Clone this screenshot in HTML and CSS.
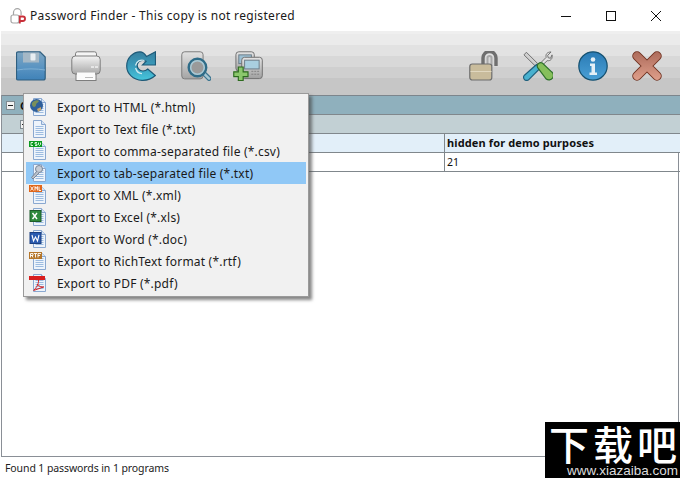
FILE: index.html
```html
<!DOCTYPE html>
<html lang="en">
<head>
<meta charset="utf-8">
<title>Password Finder</title>
<link rel="stylesheet" href="styles.css">
</head>
<body>
<svg class="defs" width="0" height="0">
  <symbol id="doc" viewBox="0 0 20 20">
    <path d="M4.500 1.500h8l4 4v13h-12z" fill="#eef4fb" stroke="#8aa8d0"/>
    <path d="M12.500 1.500v4h4" fill="#d6e4f5" stroke="#8aa8d0"/>
    <path d="M6.500 7.500h8M6.500 9.500h8M6.500 11.500h8M6.500 13.500h8M6.500 15.500h8" stroke="#9dbce0"/>
  </symbol>
</svg>
<div class="app">
  <header class="titlebar">
    <svg class="app-icon" viewBox="0 0 18 18" width="18" height="18">
      <path d="M4.500 8V5.500a3.800 3.800 0 0 1 7.600 0V8" fill="none" stroke="#a5a5a5" stroke-width="1.200"/>
      <rect x="2" y="8" width="8" height="8" rx="2" fill="none" stroke="#a5a5a5" stroke-width="1.200"/>
      <path d="M10.800 16.500V9.500h3a2.100 2.100 0 0 1 0 4.500h-3" fill="none" stroke="#c8303a" stroke-width="1.800"/>
    </svg>
    <span class="title">Password Finder - This copy is not registered</span>
    <div class="win-controls">
      <svg width="12" height="12" viewBox="0 0 12 12"><path d="M1 6.500h10" stroke="#111" fill="none"/></svg>
      <svg width="12" height="12" viewBox="0 0 12 12"><rect x="1.500" y="1.500" width="9" height="9" stroke="#111" fill="none"/></svg>
      <svg width="12" height="12" viewBox="0 0 12 12"><path d="M1 1l10 10M11 1L1 11" stroke="#111" fill="none"/></svg>
    </div>
  </header>

  <main class="panel">
    <nav class="toolbar">
      <div class="tools">
        <svg class="tool" viewBox="0 0 30 30"><defs><linearGradient id="sv" x1="0" y1="0" x2="0" y2="1"><stop offset="0" stop-color="#7fa6c2"/><stop offset=".55" stop-color="#5a94c2"/><stop offset="1" stop-color="#3f82b8"/></linearGradient></defs>
          <path d="M2 .8h22l5.200 5.200v21a2 2 0 0 1-2 2H2a1.500 1.500 0 0 1-1.500-1.500V2.300A1.500 1.500 0 0 1 2 .8z" fill="url(#sv)" stroke="#2f5f80" stroke-width="1.200"/>
          <rect x="7" y="1.500" width="16" height="10" fill="#a5b8c6"/><rect x="14.500" y="2.500" width="5" height="7" rx="1" fill="#e8eef2"/>
          <path d="M1 19c8-1.500 20-1.500 28 0" stroke="#7fb0d4" fill="none"/>
        </svg>
        <svg class="tool" viewBox="0 0 30 30"><defs><linearGradient id="pr" x1="0" y1="0" x2="0" y2="1"><stop offset="0" stop-color="#f4f4f4"/><stop offset="1" stop-color="#a9a9a9"/></linearGradient></defs>
          <rect x="4.500" y=".8" width="21" height="8" rx="2" fill="#f5f5f5" stroke="#7d7d7d"/>
          <rect x="5" y="20" width="20" height="9.500" fill="#fff" stroke="#7d7d7d"/>
          <rect x=".8" y="5" width="28.400" height="18" rx="3.500" fill="url(#pr)" stroke="#7d7d7d"/>
          <rect x="20" y="15" width="3" height="2" fill="#e6e6e6"/><rect x="24" y="15" width="3" height="2" fill="#e6e6e6"/>
          <path d="M6 21.500h18v7H6z" fill="#fbfbfb"/><path d="M14 26.500h8" stroke="#bbb"/>
        </svg>
        <svg class="tool" viewBox="0 0 30 30"><defs><linearGradient id="rf" x1="0" y1="0" x2="0" y2="1"><stop offset="0" stop-color="#38809f"/><stop offset=".5" stop-color="#3a9cbc"/><stop offset="1" stop-color="#46c6dc"/></linearGradient></defs>
          <path d="M20.500 5.500 29.500.8V14H16.500l3.500-3.700c-3.500-2-7.500-.6-8.500 2.400-1.200 3.800 2 7.300 5.500 7.300 2 0 3.500-.8 4.800-2l7.500 6.500C25.500 28 21 29.500 16 29.300 7 29 .7 22.500.7 15 .7 7 7 .9 14 .8c2.500 0 4.800 2 6.500 4.700z" fill="url(#rf)" stroke="#1e5a78" stroke-width="1.200"/>
          <path d="M9.500 14.500c.8-4 5-6.500 9-5M9.600 17c.8 3 3 5.400 6.400 5.600" fill="none" stroke="#cfe9ef" stroke-width="1.300"/>
        </svg>
        <svg class="tool" viewBox="0 0 31 31"><defs><linearGradient id="pv" x1="0" y1="0" x2="0" y2="1"><stop offset="0" stop-color="#e2e2e2"/><stop offset="1" stop-color="#a4a4a4"/></linearGradient></defs>
          <rect x=".8" y=".8" width="22" height="28" rx="3" fill="url(#pv)" stroke="#7a7a7a"/>
          <path d="M22 21.500l7 7" stroke="#3d7590" stroke-width="5" stroke-linecap="round"/><path d="M22 21.500l7 7" stroke="#a7c7d3" stroke-width="2.500" stroke-linecap="round"/>
          <circle cx="17" cy="17" r="9" fill="#9a9a9a" stroke="#2f6c88" stroke-width="2.600"/><circle cx="17" cy="17" r="7" fill="none" stroke="#a7c9d6" stroke-width="1.600"/>
        </svg>
        <svg class="tool add" viewBox="0 0 31 31"><defs><linearGradient id="ad" x1="0" y1="0" x2="0" y2="1"><stop offset="0" stop-color="#e4e4e4"/><stop offset="1" stop-color="#a0a0a0"/></linearGradient></defs>
          <rect x="3" y=".8" width="19" height="20" rx="3" fill="url(#ad)" stroke="#707070"/><rect x="6" y="4" width="13" height="9" fill="#9cc0d4" stroke="#6c7c88"/>
          <rect x="9" y="6.500" width="21.300" height="22" rx="3" fill="url(#ad)" stroke="#707070"/><rect x="12" y="9.500" width="15" height="9" fill="#a9cfe0" stroke="#6c7c88"/>
          <path d="M19 21h8M19 24h8" stroke="#808080" stroke-dasharray="2 1"/>
          <path d="M5.500 16.500h5v5h5v5h-5v4h-5v-4H.8v-5h4.700z" fill="#8bc76c" stroke="#2d6b1f" stroke-width="1.200"/>
        </svg>
      </div>
      <div class="tools tools-right">
        <svg class="tool" viewBox="0 0 30 30">
          <path d="M14 15V7a6.500 6.500 0 0 1 13 0v8" fill="none" stroke="#6f6f6f" stroke-width="3.400"/>
          <path d="M18.500 16V7a2 2 0 0 1 4 0v8" fill="none" stroke="#a8a8a8" stroke-width="2"/>
          <rect x=".8" y="13" width="22" height="16" rx="2.500" fill="#c9bc9c" stroke="#6d6d6d" stroke-width="1.200"/>
          <path d="M1.500 20.500h21" stroke="#e1d8c0"/>
        </svg>
        <svg class="tool tool-wide" viewBox="0 0 31 30">
          <path d="M1 3.500 3.500.8l13 13-2.500 2.500z" fill="#d0d0d0" stroke="#6e6e6e"/>
          <path d="M13 17 24 6c-1-3 1-5.500 5-5.500L25.500 4l.5 2.500 2.500.5L30 3.500c.8 4-1.500 6.500-5 6L14 20z" fill="#e2e2e2" stroke="#6e6e6e"/>
          <path d="M14 13.500 1.500 24.500a3 3 0 0 0 4.500 4.500l11-11z" fill="#49b1cf" stroke="#1f5f7c" stroke-width="1.200"/>
          <path d="M15 16.500a3.600 3.600 0 0 1 5-4.500l9.500 9a4 4 0 0 1-5.500 7.500z" fill="#86bf5b" stroke="#2c6f2a" stroke-width="1.200"/>
        </svg>
        <svg class="tool" viewBox="0 0 30 30"><defs><linearGradient id="inf" x1="0" y1="0" x2="0" y2="1"><stop offset="0" stop-color="#2a7ab4"/><stop offset="1" stop-color="#4aa0d6"/></linearGradient></defs>
          <circle cx="15" cy="15" r="14.200" fill="url(#inf)" stroke="#15506f" stroke-width="1.200"/>
          <circle cx="15" cy="8.500" r="2.300" fill="#e4eff6"/><path d="M12 12.500h5v9h2v2.500h-7.500v-2.500h2v-6.500h-1.500z" fill="#e4eff6"/>
        </svg>
        <svg class="tool" viewBox="0 0 30 30"><defs><linearGradient id="xx" gradientUnits="userSpaceOnUse" x1="0" y1="0" x2="0" y2="30"><stop offset="0" stop-color="#ac6a5a"/><stop offset="1" stop-color="#e0a08c"/></linearGradient></defs>
          <path d="M5 5l20 20M25 5L5 25" stroke="#6f2f1e" stroke-width="9.500" stroke-linecap="round" fill="none"/>
          <path d="M5 5l20 20M25 5L5 25" stroke="url(#xx)" stroke-width="7.500" stroke-linecap="round" fill="none"/>
        </svg>
      </div>
    </nav>

    <div class="tree">
      <div class="row row-group">
        <span class="expander"></span>
        <span class="group-name">C</span>
      </div>
      <div class="row row-sub">
        <span class="expander expander-sub"></span>
      </div>
      <div class="row row-head">
        <div class="cell cell-main"></div>
        <div class="cell cell-value">hidden for demo purposes</div>
      </div>
      <div class="row row-data">
        <div class="cell cell-main"></div>
        <div class="cell cell-value cell-plain">21</div>
      </div>
    </div>
  </main>

  <footer class="status">Found 1 passwords in 1 programs</footer>

  <ul class="menu">
    <li class="item"><svg class="mi" viewBox="0 0 20 20"><use href="#doc"/><circle cx="7.500" cy="8.500" r="6.500" fill="#2f5f9a"/><path d="M3 6c2-3 6-3.500 7-2-1 2-3 2-3 4s-3 3-4 0z" fill="#7a8f5a"/><path d="M8 12l4-2 0 3-3 1.500z" fill="#c7a56a"/></svg>Export to HTML (*.html)</li>
    <li class="item"><svg class="mi" viewBox="0 0 20 20"><use href="#doc"/></svg>Export to Text file (*.txt)</li>
    <li class="item"><svg class="mi" viewBox="0 0 20 20"><use href="#doc"/><rect x="0" y="0" width="13" height="6" fill="#0c9a20"/><path d="M4 1.500H2v3h2M8 1.500H6v1.500h2v1.500H6M9.500 1.500v2l1 1 1-1v-2" stroke="#eaffea" fill="none" stroke-width=".9"/></svg>Export to comma-separated file (*.csv)</li>
    <li class="item item-active"><svg class="mi" viewBox="0 0 20 20"><use href="#doc"/><circle cx="10" cy="6" r="3.500" fill="#c6ccd6" stroke="#7a8798"/><path d="M8 8l-5.500 6.500 1.500 1.500 6-6" fill="#b8bfca" stroke="#7a8798"/></svg>Export to tab-separated file (*.txt)</li>
    <li class="item"><svg class="mi" viewBox="0 0 20 20"><use href="#doc"/><rect x="0" y="0" width="13" height="7" fill="#e0661a"/><path d="M1.500 1.500l3 4M4.500 1.500l-3 4M6 5.500v-4l1.200 2 1.200-2v4M10 1.500v4h2" stroke="#fff" fill="none" stroke-width=".9"/></svg>Export to XML (*.xml)</li>
    <li class="item"><svg class="mi" viewBox="0 0 20 20"><use href="#doc"/><rect x="1" y="3.500" width="11" height="11" fill="#2f8a3c" stroke="#1d5c2a"/><path d="M3.500 6l4.500 6M8 6l-4.500 6" stroke="#fff" stroke-width="1.400"/></svg>Export to Excel (*.xls)</li>
    <li class="item"><svg class="mi" viewBox="0 0 20 20"><use href="#doc"/><rect x="1" y="3.500" width="11" height="11" fill="#2a5bb0" stroke="#1b3f80"/><path d="M3 6l1.500 6L6.500 8l2 4L10 6" stroke="#fff" fill="none" stroke-width="1.100"/></svg>Export to Word (*.doc)</li>
    <li class="item"><svg class="mi" viewBox="0 0 20 20"><use href="#doc"/><rect x="0" y="1" width="13" height="7" fill="#b5762a"/><path d="M1.500 6.500v-4H4v2H1.500M3 4.500l1 2M5 2.500h3M6.500 2.500v4M9 6.500v-4h3M9 4.500h2" stroke="#fff" fill="none" stroke-width=".9"/></svg>Export to RichText format (*.rtf)</li>
    <li class="item"><svg class="mi" viewBox="0 0 20 20"><use href="#doc"/><rect x="0" y="3" width="16" height="4" fill="#d81e1e"/><path d="M5 17c3-3 5-7 4.500-10M8 11c2 2.500 5 3.500 7 3M4.500 17.500l10-3.500" stroke="#d81e1e" fill="none"/></svg>Export to PDF (*.pdf)</li>
  </ul>

  <aside class="brand">
    <div class="brand-mark">下载吧</div>
    <div class="brand-url">www.xiazaiba.com</div>
  </aside>
</div>
</body>
</html>
```
FILE: styles.css
```css
* { box-sizing: border-box; }
html, body { margin: 0; padding: 0; }
body { width: 680px; height: 478px; overflow: hidden; background: #fff; font-family: "Noto Sans", "Open Sans", sans-serif; color: #111; }
.defs { position: absolute; }
.app { position: relative; width: 680px; height: 478px; display: flex; flex-direction: column; overflow: hidden; }

.titlebar { height: 31px; flex: none; display: flex; align-items: center; padding-left: 9px; background: #fff; }
.app-icon { flex: none; margin-right: 3px; }
.title { font-size: 12px; letter-spacing: .32px; color: #1a1a1a; }
.win-controls { margin-left: auto; display: flex; gap: 33px; padding-right: 18px; }

.panel { flex: 1; margin-left: 1px; border-left: 1px solid #8a8f96; border-right: 1px solid #8a8f96; border-bottom: 1px solid #8a8f96; margin-right: 1px; display: flex; flex-direction: column; min-height: 0; }
.toolbar { height: 64px; flex: none; margin-left: -1px; margin-right: -2px; display: flex; justify-content: space-between; align-items: flex-start; padding: 20px 18px 0 15px;
  background: linear-gradient(#efefef 0, #efefef 3px, #ebebeb 3px, #ebebeb 14px, #e2e2e2 14px, #e2e2e2 25px, #d8d8d8 25px, #d8d8d8 36px, #cfcfcf 36px, #cfcfcf 47px, #c6c6c6 47px); }
.tools { display: flex; gap: 25px; }
.tools-right { gap: 24px; }
.tool { width: 30px; height: 30px; display: block; flex: none; }
.tool-wide { margin-right: 1px; }
.add { margin-left: -3px; }

.tree { flex: 1; background: #fff; }
.row { height: 19px; display: flex; align-items: center; border-top: 1px solid #80878c; margin-right: -2px; font-size: 11px; }
.row-group { background: #8fb0bd; border-top-color: #7c858c; }
.row-sub { background: #c2d0d4; }
.row-head { background: #e2eff9; align-items: stretch; }
.row-data { align-items: stretch; border-bottom: 1px solid #80878c; height: 20px; }
.expander { width: 9px; height: 9px; margin-left: 4px; border: 1px solid #7f8a90; flex: none; background: linear-gradient(#f2f2f2 3px, #222 3px, #222 4px, #f2f2f2 4px) no-repeat 1px 0 / 5px 100%, #f2f2f2; }
.expander-sub { margin-left: 18px; }
.group-name { margin-left: 5px; font-weight: 700; font-size: 11px; }
.cell { display: flex; align-items: center; }
.cell-main { width: 442px; }
.cell-value { flex: 1; padding: 0 0 2px 2px; border-left: 1px solid #80878c; font-family: "Noto Sans", sans-serif; font-weight: 700; font-size: 11px; letter-spacing: .12px; }
.cell-plain { padding-bottom: 0; font-weight: 400; font-size: 10.500px; letter-spacing: 0; }

.status { height: 21px; flex: none; padding: 4px 0 0 5px; font-size: 10.500px; letter-spacing: -.1px; line-height: 15px; color: #222; }

.menu { position: absolute; left: 23px; top: 93px; width: 286px; height: 204px; margin: 0; padding: 2px; list-style: none; background: #f1f1f1; border: 1px solid #9a9a9a; box-shadow: 3px 3px 3px rgba(70,70,70,.65); }
.item { height: 22px; display: flex; align-items: center; font-size: 12px; letter-spacing: .2px; padding-left: 3px; width: 280px; color: #1a1a1a; }
.item-active { background: #90c8f6; }
.mi { width: 20px; height: 20px; margin-right: 8px; flex: none; }

.brand { position: absolute; right: 0; bottom: 0; width: 135px; height: 56px; background: #000; color: #fff; display: flex; flex-direction: column; justify-content: flex-end; }
.brand-mark { font-family: "Noto Sans CJK SC", sans-serif; font-weight: 500; font-size: 40px; line-height: 42px; letter-spacing: 4px; padding-left: 4px; white-space: nowrap; text-align: center; }
.brand-url { font-family: "Liberation Sans", sans-serif; font-size: 13.500px; line-height: 14px; text-align: right; padding-right: 2px; color: #ddd; }
```
